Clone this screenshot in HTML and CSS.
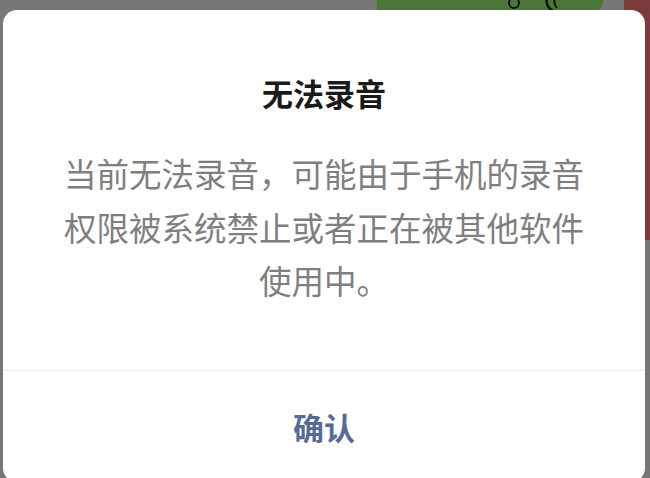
FILE: index.html
```html
<!DOCTYPE HTML>
<html>

<head>
    <title>无法录音</title>
    <meta name="viewport" content="width=device-width, initial-scale=1">
    <link rel="stylesheet" href="styles.css">
</head>

<body>
    <div class="backdrop">
        <div class="bg-green">
            <svg class="bg-marks" width="226" height="12" viewBox="0 0 226 12">
                <ellipse cx="137" cy="3" rx="5" ry="5" fill="none" stroke="#111" stroke-width="2" />
                <path d="M170 -2 Q168 6 176 11" fill="none" stroke="#111" stroke-width="2.5" />
                <path d="M178 -2 Q176 4 180 8" fill="none" stroke="#111" stroke-width="2" />
            </svg>
        </div>
        <div class="bg-red"></div>
    </div>
    <div class="dialog">
        <div class="dialog-body">
            <h1 class="dialog-title">无法录音</h1>
            <p class="dialog-text">当前无法录音，可能由于手机的录音权限被系统禁止或者正在被其他软件使用中。</p>
        </div>
        <div class="dialog-footer">
            <button class="dialog-button">确认</button>
        </div>
    </div>
</body>

</html>
```

FILE: styles.css
```css
html {
    font-family: "Noto Sans CJK SC", "Noto Sans", sans-serif;
}

body {
    margin: 0;
    height: 478px;
    overflow: hidden;
    background-color: #777777;
    position: relative;
}

/* app behind the dimmed overlay */
.backdrop {
    position: absolute;
    top: 0;
    left: 0;
    right: 0;
    height: 250px;
}

.bg-green {
    position: absolute;
    left: 377px;
    top: 0;
    width: 226px;
    height: 12px;
    background-color: #4a7737;
    border-bottom-right-radius: 10px;
}

.bg-marks {
    display: block;
}

.bg-red {
    position: absolute;
    left: 624px;
    top: 0;
    right: 0;
    height: 240px;
    background-color: #7b3a3c;
}

.dialog {
    position: relative;
    margin: 10px 5px 0 3px;
    height: 472px;
    background-color: #ffffff;
    border-radius: 14px;
    display: flex;
    flex-direction: column;
    text-align: center;
}

.dialog-body {
    padding: 61px 56px 63px;
    border-bottom: 1px solid #ececec;
}

.dialog-title {
    margin: 0;
    font-size: 31px;
    line-height: 44px;
    font-weight: bold;
    color: #1a1a1a;
}

.dialog-text {
    margin: 31px 0 0;
    font-size: 32.5px;
    line-height: 53.5px;
    color: #7f7f7f;
}

.dialog-footer {
    height: 112px;
    display: flex;
    align-items: center;
    justify-content: center;
}

.dialog-button {
    border: none;
    background: none;
    padding: 0;
    font-family: inherit;
    font-size: 31px;
    font-weight: bold;
    color: #576b95;
}
```
